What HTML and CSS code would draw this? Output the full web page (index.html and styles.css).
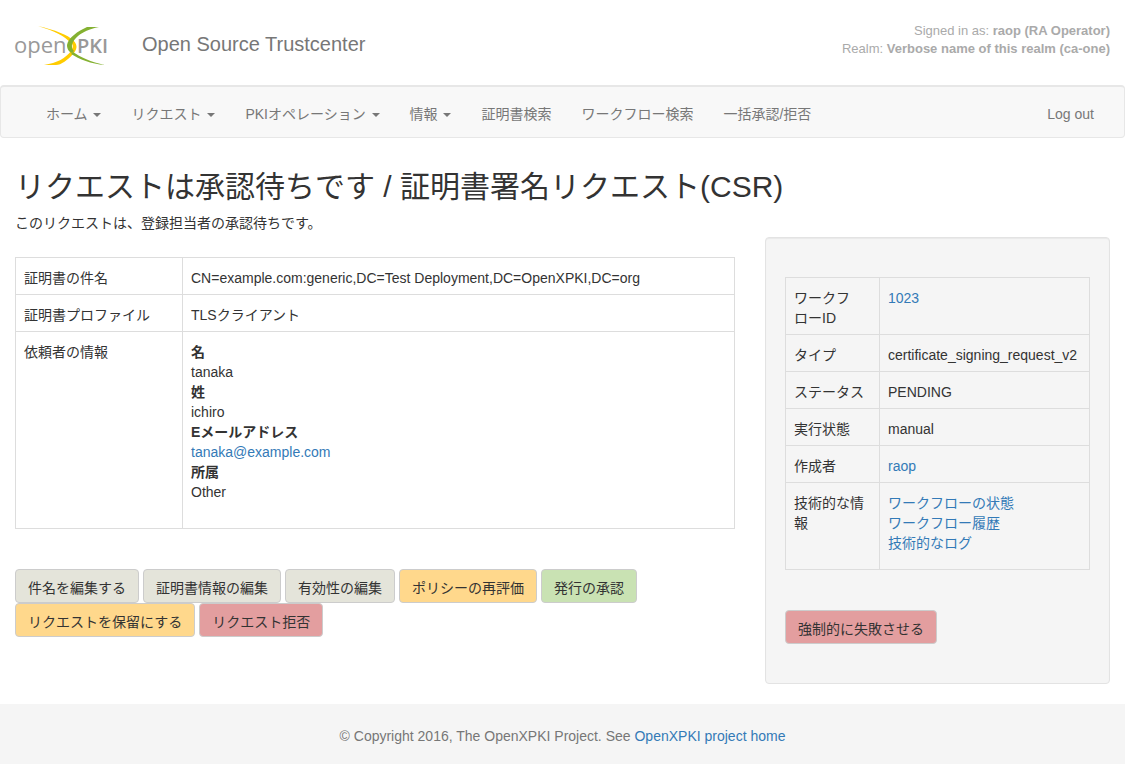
FILE: index.html
```html
<!DOCTYPE html>
<html lang="ja">
<head>
<meta charset="utf-8">
<title>Open Source Trustcenter</title>
<link rel="stylesheet" href="styles.css">
</head>
<body>
<header class="header">
  <a class="brand" href="#" aria-label="OpenXPKI">
    <svg class="logo" viewBox="0 0 92 40" width="92" height="40">
      <text class="logo-open" x="-1" y="27">open</text>
      <text class="logo-pki" x="62" y="27">PKI</text>
      <path fill="#fc0" d="M23 0C40 4 53 9 58 14L56 17C49 10 40 5 23 0Z"/>
      <path fill="#fc0" d="M56 13C63 17 63 23 58 28C53 34 46 39 41 39H29C42 37 51 32 56 25C59 21 58 17 54 15Z"/>
      <path fill="#84b131" d="M84 1H72C63 5 53 12 52 19C52 23 54 26 57 27L59 25C55 21 57 15 63 10C68 6 74 3 84 1Z"/>
      <path fill="#84b131" d="M58 26C65 31 76 36 90 39C76 38 64 33 56 28Z"/>
    </svg>
  </a>
  <div class="slogan">Open Source Trustcenter</div>
  <div class="session">Signed in as: <b>raop (RA Operator)</b><br>Realm: <b>Verbose name of this realm (ca-one)</b></div>
</header>
<nav class="navbar">
  <ul class="menu">
    <li><a href="#">ホーム <span class="caret"></span></a></li>
    <li><a href="#">リクエスト <span class="caret"></span></a></li>
    <li><a href="#">PKIオペレーション <span class="caret"></span></a></li>
    <li><a href="#">情報 <span class="caret"></span></a></li>
    <li><a href="#">証明書検索</a></li>
    <li><a href="#">ワークフロー検索</a></li>
    <li><a href="#">一括承認/拒否</a></li>
  </ul>
  <a class="logout" href="#">Log out</a>
</nav>
<main class="page">
  <h1>リクエストは承認待ちです / 証明書署名リクエスト(CSR)</h1>
  <p class="intro">このリクエストは、登録担当者の承認待ちです。</p>
  <div class="columns">
    <section class="content">
      <table class="info">
        <tr><th scope="row">証明書の件名</th><td>CN=example.com:generic,DC=Test Deployment,DC=OpenXPKI,DC=org</td></tr>
        <tr><th scope="row">証明書プロファイル</th><td>TLSクライアント</td></tr>
        <tr><th scope="row">依頼者の情報</th><td>
          <dl>
            <dt>名</dt><dd>tanaka</dd>
            <dt>姓</dt><dd>ichiro</dd>
            <dt>Eメールアドレス</dt><dd><a href="mailto:tanaka@example.com">tanaka@example.com</a></dd>
            <dt>所属</dt><dd>Other</dd>
          </dl>
        </td></tr>
      </table>
      <div class="actions">
        <button class="btn" type="button">件名を編集する</button>
        <button class="btn" type="button">証明書情報の編集</button>
        <button class="btn" type="button">有効性の編集</button>
        <button class="btn warn" type="button">ポリシーの再評価</button>
        <button class="btn good" type="button">発行の承認</button>
        <button class="btn warn" type="button">リクエストを保留にする</button>
        <button class="btn bad" type="button">リクエスト拒否</button>
      </div>
    </section>
    <aside class="sidebar">
      <div class="well">
        <table class="info side">
          <tr><th scope="row">ワークフローID</th><td><a href="#">1023</a></td></tr>
          <tr><th scope="row">タイプ</th><td>certificate_signing_request_v2</td></tr>
          <tr><th scope="row">ステータス</th><td>PENDING</td></tr>
          <tr><th scope="row">実行状態</th><td>manual</td></tr>
          <tr><th scope="row">作成者</th><td><a href="#">raop</a></td></tr>
          <tr><th scope="row">技術的な情報</th><td>
            <ul class="links">
              <li><a href="#">ワークフローの状態</a></li>
              <li><a href="#">ワークフロー履歴</a></li>
              <li><a href="#">技術的なログ</a></li>
            </ul>
          </td></tr>
        </table>
        <div class="actions">
          <button class="btn bad" type="button">強制的に失敗させる</button>
        </div>
      </div>
    </aside>
  </div>
</main>
<footer class="footer">© Copyright 2016, The OpenXPKI Project. See <a href="#">OpenXPKI project home</a></footer>
</body>
</html>
```
FILE: styles.css
```css
* { box-sizing: border-box; }
body {
  margin: 0;
  background: #fff;
  color: #333;
  font: 14px/20px "Liberation Sans", "Noto Sans CJK JP", sans-serif;
}
a { color: #337ab7; text-decoration: none; }
ul, dl, dd, p, h1 { margin: 0; padding: 0; }
ul { list-style: none; }

.header {
  display: flex;
  align-items: flex-start;
  padding: 0 15px 19px;
}
.brand { display: block; padding-top: 26px; }
.logo { display: block; overflow: visible; }
.logo-open, .logo-pki { font-family: "Open Sans", sans-serif; fill: #999; }
.logo-open { font-size: 22px; font-weight: 400; }
.logo-pki { font-size: 20px; font-weight: 600; }
.slogan {
  margin-left: 35px;
  padding-top: 32px;
  color: #777;
  font-size: 20px;
  line-height: 24px;
}
.session {
  margin-left: auto;
  padding-top: 22px;
  color: #aaa;
  font-size: 13px;
  line-height: 18px;
  text-align: right;
}

.navbar {
  display: flex;
  justify-content: space-between;
  padding: 0 15px;
  background: #f8f8f8;
  border: 1px solid #e7e7e7;
  border-top-width: 2px;
  border-radius: 4px;
}
.menu { display: flex; padding-left: 15px; }
.menu a, .logout { display: block; padding: 17px 15px 13px; color: #777; }
.caret {
  display: inline-block;
  margin-left: 2px;
  vertical-align: middle;
  border-top: 4px solid;
  border-right: 4px solid transparent;
  border-left: 4px solid transparent;
}

.page { padding: 32px 0 20px; }
h1 { padding: 0 15px; font-size: 30px; line-height: 33px; font-weight: 400; }
.intro { padding: 10px 15px 0; }
.columns { display: grid; grid-template-columns: minmax(0, 2fr) minmax(0, 1fr); margin-top: 4px; }
.content { padding: 20px 15px 0; }
.sidebar { padding: 0 15px; }

.info { width: 100%; border-collapse: collapse; }
.info th, .info td {
  padding: 10px 8px 6px;
  border: 1px solid #ddd;
  font-weight: 400;
  text-align: left;
  vertical-align: top;
  line-break: strict;
}
.info th { width: 167px; }
.side th { width: 94px; }
dl { padding-bottom: 20px; }
dt { font-weight: 700; }
.links { padding-bottom: 10px; }

.actions { display: flex; flex-wrap: wrap; column-gap: 4px; margin-top: 40px; }
.btn {
  padding: 8px 12px 4px;
  border: 1px solid #ccc;
  border-radius: 4px;
  background: #e4e4da;
  color: #333;
  font: inherit;
}
.warn { background: #ffd88c; }
.good { background: #c9e2b3; }
.bad { background: #e39e9f; }

.well {
  padding: 39px 19px;
  background: #f5f5f5;
  border: 1px solid #e3e3e3;
  border-radius: 4px;
  box-shadow: inset 0 1px 1px rgba(0, 0, 0, .05);
}
.info.side th { width: 94px; }

.footer { padding: 22px 15px 18px; background: #f5f5f5; color: #777; text-align: center; }
```
